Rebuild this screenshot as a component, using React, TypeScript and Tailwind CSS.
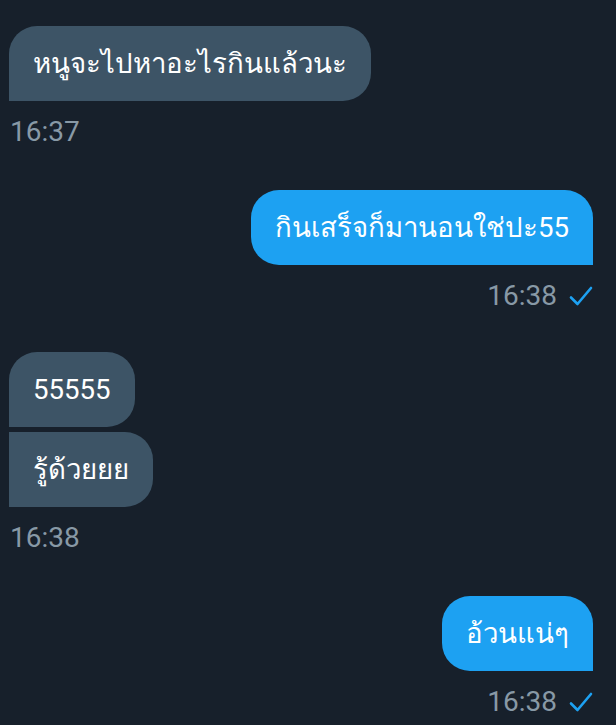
function Check() {
  return (
    <svg width="24" height="22" viewBox="0 0 24 22" fill="none" className="ml-3">
      <path d="M2 12.5 L8.5 19 L22 3" stroke="#1da1f2" strokeWidth="2.6" strokeLinecap="round" strokeLinejoin="round" />
    </svg>
  );
}

function Received({ text, shape }: { text: string; shape: string }) {
  return (
    <div className={`flex h-[75px] items-center bg-[#3d5466] px-6 text-[27.6px] text-white ${shape}`}>
      {text}
    </div>
  );
}

function Sent({ text }: { text: string }) {
  return (
    <div className="flex h-[75px] items-center rounded-[28px] rounded-br-none bg-[#1da1f2] px-6 text-[27.6px] text-white">
      {text}
    </div>
  );
}

function Stamp({ time, read }: { time: string; read?: boolean }) {
  return (
    <div className="mt-[15px] flex h-8 items-center text-[28px] text-[#8899a6]">
      {time}
      {read && <Check />}
    </div>
  );
}

export default function App() {
  return (
    <div className="h-[725px] w-[616px] overflow-hidden bg-[#17202b] pl-[9px] pr-[23px] pt-[26px] font-['Roboto',sans-serif]">
      <div className="flex flex-col items-start">
        <Received text="หนูจะไปหาอะไรกินแล้วนะ" shape="rounded-[28px] rounded-bl-none" />
        <div className="pl-px">
          <Stamp time="16:37" />
        </div>
      </div>

      <div className="mt-[42px] flex flex-col items-end">
        <Sent text="กินเสร็จก็มานอนใช่ปะ55" />
        <Stamp time="16:38" read />
      </div>

      <div className="mt-[40px] flex flex-col items-start gap-[5px]">
        <Received text="55555" shape="rounded-[28px] rounded-bl-none" />
        <Received text="รู้ด้วยยย" shape="rounded-r-[28px]" />
      </div>
      <div className="pl-px">
        <Stamp time="16:38" />
      </div>

      <div className="mt-[42px] flex flex-col items-end">
        <Sent text="อ้วนแน่ๆ" />
        <Stamp time="16:38" read />
      </div>
    </div>
  );
}
